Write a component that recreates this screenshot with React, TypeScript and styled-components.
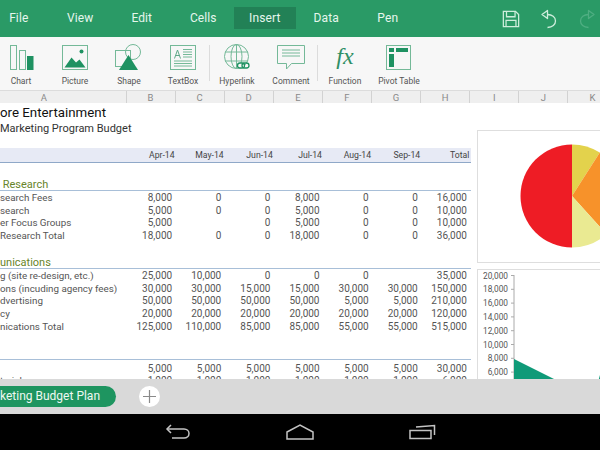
import React from 'react';
import styled, { createGlobalStyle } from 'styled-components';

const GREEN = '#2a9a66';
const OUTLINE = '#74b998';
const FILL = '#1f9262';

const Global = createGlobalStyle`
  html, body { margin: 0; padding: 0; background: #fff; }
  body { font-family: Roboto, "Liberation Sans", sans-serif; }
`;

const Screen = styled.div`
  width: 600px;
  height: 450px;
  display: flex;
  flex-direction: column;
  overflow: hidden;
`;

const TopBar = styled.header`
  height: 37px;
  flex: none;
  background: ${GREEN};
  display: flex;
  align-items: center;
`;

const Menu = styled.nav`
  display: flex;
  margin-left: -12px;
`;

const MenuItem = styled.div<{ $active?: boolean }>`
  width: 61.5px;
  height: 22px;
  margin-top: -1px;
  display: flex;
  align-items: center;
  justify-content: center;
  font-size: 12px;
  letter-spacing: 0.1px;
  color: #e6f6ed;
  background: ${(p) => (p.$active ? '#228156' : 'transparent')};
`;

const Actions = styled.div`
  margin-left: auto;
  display: flex;
  align-items: center;
  gap: 20px;
  padding-right: 4px;
`;

const Ribbon = styled.div`
  height: 53px;
  flex: none;
  background: #f7f7f7;
  display: flex;
  margin-left: -6px;
`;

const Tool = styled.div<{ $divider?: boolean }>`
  position: relative;
  width: 54px;
  display: flex;
  flex-direction: column;
  align-items: center;
  padding-top: 6px;
  box-sizing: border-box;
  &::after {
    content: '';
    display: ${(p) => (p.$divider ? 'block' : 'none')};
    position: absolute;
    right: 0;
    top: 8px;
    height: 36px;
    width: 1px;
    background: #dcdcdc;
  }
`;

const ToolIcon = styled.div`
  height: 28px;
  width: 30px;
  display: flex;
  justify-content: center;
`;

const ToolLabel = styled.span`
  margin-top: 5px;
  font-size: 8.5px;
  color: #555;
  white-space: nowrap;
`;

const FxGlyph = styled.span`
  font-family: "Liberation Serif", serif;
  font-style: italic;
  font-size: 24px;
  line-height: 26px;
  color: #2f8f66;
`;

const ColumnHeader = styled.div`
  height: 13px;
  flex: none;
  display: grid;
  grid-template-columns: 126.5px repeat(10, 49.1px);
  background: #efefef;
  border-top: 1px solid #dcdcdc;
  border-bottom: 1px solid #d4d4d4;
  box-sizing: content-box;
  margin-bottom: -2px;
`;

const ColumnCell = styled.div<{ $first?: boolean }>`
  font-size: 9.5px;
  line-height: 13px;
  text-align: center;
  color: #8a8a8a;
  border-right: 1px solid #d2d2d2;
  padding-right: ${(p) => (p.$first ? '38px' : '0')};
`;

const Sheet = styled.main`
  flex: 1;
  min-height: 0;
  display: flex;
  overflow: hidden;
  background: #fff;
`;

const Table = styled.div`
  width: 470.5px;
  flex: none;
`;

const Title = styled.div`
  height: 18px;
  padding-top: 1px;
  line-height: 17px;
  font-size: 13.3px;
  color: #111;
  white-space: nowrap;
`;

const Subtitle = styled.div`
  height: 14px;
  margin-bottom: 12px;
  line-height: 14px;
  font-size: 11px;
  color: #333;
  white-space: nowrap;
`;

const Grid = styled.div<{ $kind?: 'head' | 'plain' }>`
  display: grid;
  grid-template-columns: 126.5px repeat(7, 49.14px);
  height: ${(p) => (p.$kind === 'head' ? '14px' : '12.75px')};
  align-items: center;
  background: ${(p) => (p.$kind === 'head' ? '#e7eaf5' : 'transparent')};
  border-bottom: ${(p) => (p.$kind === 'head' ? '1px solid #8fa8c8' : 'none')};
`;

const Label = styled.div`
  font-size: 9.8px;
  color: #555;
  white-space: nowrap;
`;

const Num = styled.div<{ $head?: boolean }>`
  font-size: ${(p) => (p.$head ? '8.7px' : '10px')};
  color: ${(p) => (p.$head ? '#444' : '#555')};
  text-align: right;
  padding-right: ${(p) => (p.$head ? '1px' : '3.5px')};
  white-space: nowrap;
`;

const Section = styled.div<{ $top: number }>`
  margin-top: ${(p) => p.$top}px;
  height: 13px;
  line-height: 15px;
  font-size: 11px;
  color: #67842a;
  border-bottom: 1px solid #a8bfd8;
  box-sizing: content-box;
  white-space: nowrap;
`;

const Rule = styled.div`
  margin-top: 26px;
  height: 1px;
  background: #a8bfd8;
  margin-bottom: 2px;
`;

const Charts = styled.aside`
  flex: 1;
  padding: 27px 0 0 6.5px;
  display: flex;
  flex-direction: column;
  gap: 6px;
  min-width: 0;
`;

const ChartCard = styled.div<{ $height: number }>`
  height: ${(p) => p.$height}px;
  flex: none;
  width: 140px;
  border: 1px solid #dedede;
  background: #fff;
  overflow: hidden;
`;

const TabBar = styled.div`
  height: 35px;
  flex: none;
  position: relative;
  z-index: 1;
  background: #d9d9d9;
  display: flex;
  align-items: center;
  gap: 23px;
`;

const SheetTab = styled.div`
  width: 116px;
  height: 21px;
  margin-top: -1px;
  background: #1e9560;
  border-radius: 0 11px 11px 0;
  color: #eef8f2;
  font-size: 12px;
  line-height: 21px;
  white-space: nowrap;
  overflow: hidden;
`;

const AddSheet = styled.div`
  width: 21px;
  height: 21px;
  margin-top: -1px;
  border-radius: 50%;
  background: #fff;
  display: flex;
  align-items: center;
  justify-content: center;
`;

const NavBar = styled.footer`
  height: 36px;
  flex: none;
  background: #000;
  display: grid;
  grid-template-columns: repeat(3, 122px);
  justify-content: center;
  align-items: center;
  justify-items: center;
`;

const SaveIcon = () => (
  <svg width="18" height="18" viewBox="0 0 20 20" fill="none" stroke="#cfeedd" strokeWidth="1.4">
    <path d="M1.5 1.5H15L18.5 5V18.5H1.5Z" />
    <path d="M5 1.5V7.5H14.5V1.5" />
    <path d="M4.5 18.5V11.5H15.5V18.5" />
  </svg>
);

const UndoIcon = ({ flip, color }: { flip?: boolean; color: string }) => (
  <svg
    width="18"
    height="20"
    viewBox="0 0 18 20"
    fill="none"
    stroke={color}
    strokeWidth="1.3"
    style={flip ? { transform: 'scaleX(-1)' } : undefined}
  >
    <path d="M7.5 1.5L2 5.5L7.5 9.5Z" strokeLinejoin="round" />
    <path d="M7.5 5.5C12 5.5 15.5 8 15.5 12C15.5 15.5 12.5 18.5 7.5 18.5" />
  </svg>
);

const ChartIcon = () => (
  <svg width="28" height="28" viewBox="0 0 28 28" fill="none" stroke={OUTLINE} strokeWidth="1">
    <rect x="3.5" y="2.5" width="6" height="24" />
    <rect x="12.5" y="7.5" width="6" height="19" />
    <rect x="20" y="13" width="6.5" height="14" fill={FILL} stroke="none" />
  </svg>
);

const PictureIcon = () => (
  <svg width="28" height="28" viewBox="0 0 28 28" fill="none">
    <rect x="1.5" y="2.5" width="25" height="24" stroke={OUTLINE} />
    <circle cx="20.5" cy="8.5" r="2" fill={FILL} />
    <path d="M3.5 24.5L10.5 14.5L15 19.5L18.5 16.5L24.5 24.5Z" fill={FILL} />
  </svg>
);

const ShapeIcon = () => (
  <svg width="30" height="28" viewBox="0 0 30 28" fill="none" stroke={OUTLINE} strokeWidth="1">
    <rect x="1.5" y="7.5" width="15" height="16" />
    <circle cx="19" cy="9" r="7.5" />
    <path d="M14.5 12L24 27H5Z" fill={FILL} stroke="none" />
  </svg>
);

const TextBoxIcon = () => (
  <svg width="28" height="28" viewBox="0 0 28 28" fill="none" stroke={OUTLINE} strokeWidth="1">
    <rect x="1.5" y="2.5" width="25" height="24" />
    <path d="M5.5 15.5L8.5 7L11.5 15.5M6.5 12.5H10.5" stroke="#5fa888" />
    <path d="M14 6.5H23M14 9H23M14 11.5H23M14 14H23M5 18H23M5 20.5H23M5 23H23" />
  </svg>
);

const HyperlinkIcon = () => (
  <svg width="28" height="28" viewBox="0 0 28 28" fill="none" stroke={OUTLINE} strokeWidth="1">
    <circle cx="13.5" cy="13.5" r="12" />
    <ellipse cx="13.5" cy="13.5" rx="5.5" ry="12" />
    <path d="M13.5 1.5V25.5M2 9H25M2 18H25" />
    <rect x="14.5" y="20" width="7" height="5" rx="2.5" stroke={FILL} strokeWidth="1.3" fill="#f7f7f7" />
    <rect x="19" y="20" width="7" height="5" rx="2.5" stroke={FILL} strokeWidth="1.3" />
  </svg>
);

const CommentIcon = () => (
  <svg width="30" height="28" viewBox="0 0 30 28" fill="none" stroke={OUTLINE} strokeWidth="1">
    <path d="M1.5 2.5H28.5V20.5H15.5L10.5 26V20.5H1.5Z" />
    <path d="M6 7H24M6 10H24M6 13H24" />
  </svg>
);

const PivotIcon = () => (
  <svg width="28" height="28" viewBox="0 0 28 28" fill="none">
    <rect x="1.5" y="2.5" width="24" height="24" stroke={OUTLINE} />
    <rect x="4" y="5" width="5" height="4" fill={FILL} />
    <rect x="11" y="5" width="12" height="4" fill={FILL} />
    <rect x="4" y="11" width="5" height="13" fill={FILL} />
  </svg>
);

const PieChart = () => (
  <svg width="140" height="130" viewBox="0 0 140 130">
    {/* centre sits at 94,65 inside the card */}
    <path d="M94 65L94 13.5A51.5 51.5 0 0 0 94 116.5Z" fill="#ee1c25" />
    <path d="M94 65L94 13.5A51.5 51.5 0 0 1 121.8 21.6Z" fill="#e3d24c" />
    <path d="M94 65L121.8 21.6A51.5 51.5 0 0 1 128.5 103.3Z" fill="#f7922a" />
    <path d="M94 65L128.5 103.3A51.5 51.5 0 0 1 94 116.5Z" fill="#eaea92" />
  </svg>
);

const AXIS = ['20,000', '18,000', '16,000', '14,000', '12,000', '10,000', '8,000', '6,000'];

const AreaChart = () => (
  <svg width="140" height="112" viewBox="0 0 140 112" fontFamily="Roboto, sans-serif">
    <line x1="36" y1="5" x2="36" y2="112" stroke="#aaa" />
    {AXIS.map((t, i) => (
      <g key={t}>
        <text x="30" y={8.5 + i * 13.8} textAnchor="end" fontSize="8.3" fill="#555">
          {t}
        </text>
        <line x1="33" x2="36" y1={5.5 + i * 13.8} y2={5.5 + i * 13.8} stroke="#aaa" />
      </g>
    ))}
    <path d="M36 89L78 110V112H36Z" fill="#0f9a78" />
    <path d="M120 112L122 105V112Z" fill="#0f9a78" />
  </svg>
);

const BackIcon = () => (
  <svg width="26" height="16" viewBox="0 0 26 16" fill="none" stroke="#c4c4c4" strokeWidth="1.5">
    <path d="M6 1L2 5L6 9" />
    <path d="M2 5H19C22 5 24 7 24 9.5C24 12 22 14 19 14H7" />
  </svg>
);

const HomeIcon = () => (
  <svg width="28" height="16" viewBox="0 0 28 16" fill="none" stroke="#c4c4c4" strokeWidth="1.5">
    <path d="M1 8L14 1L27 8V15H1Z" />
  </svg>
);

const RecentsIcon = () => (
  <svg width="27" height="16" viewBox="0 0 27 16" fill="none" stroke="#c4c4c4" strokeWidth="1.5">
    <rect x="1" y="6.5" width="21" height="8" />
    <path d="M7 3L25.5 1.5V11" />
  </svg>
);

const MENU = ['File', 'View', 'Edit', 'Cells', 'Insert', 'Data', 'Pen'];
const COLUMNS = ['A', 'B', 'C', 'D', 'E', 'F', 'G', 'H', 'I', 'J', 'K'];
const MONTHS = ['Apr-14', 'May-14', 'Jun-14', 'Jul-14', 'Aug-14', 'Sep-14', 'Total'];

const TOOLS: { label: string; icon: React.ReactNode; divider?: boolean }[] = [
  { label: 'Chart', icon: <ChartIcon /> },
  { label: 'Picture', icon: <PictureIcon /> },
  { label: 'Shape', icon: <ShapeIcon /> },
  { label: 'TextBox', icon: <TextBoxIcon />, divider: true },
  { label: 'Hyperlink', icon: <HyperlinkIcon /> },
  { label: 'Comment', icon: <CommentIcon />, divider: true },
  { label: 'Function', icon: <FxGlyph>fx</FxGlyph> },
  { label: 'Pivot Table', icon: <PivotIcon /> },
];

type Row = [string, ...string[]];

const RESEARCH: Row[] = [
  ['search Fees', '8,000', '0', '0', '8,000', '0', '0', '16,000'],
  ['search', '5,000', '0', '0', '5,000', '0', '0', '10,000'],
  ['er Focus Groups', '5,000', '', '0', '5,000', '0', '0', '10,000'],
  ['Research Total', '18,000', '0', '0', '18,000', '0', '0', '36,000'],
];

const COMMS: Row[] = [
  ['g (site re-design, etc.)', '25,000', '10,000', '0', '0', '0', '', '35,000'],
  ['ons (incuding agency fees)', '30,000', '30,000', '15,000', '15,000', '30,000', '30,000', '150,000'],
  ['dvertising', '50,000', '50,000', '50,000', '50,000', '5,000', '5,000', '210,000'],
  ['cy', '20,000', '20,000', '20,000', '20,000', '20,000', '20,000', '120,000'],
  ['nications Total', '125,000', '110,000', '85,000', '85,000', '55,000', '55,000', '515,000'],
];

const LAST: Row[] = [
  ['', '5,000', '5,000', '5,000', '5,000', '5,000', '5,000', '30,000'],
  ['terials', '1,000', '1,000', '1,000', '1,000', '1,000', '1,000', '6,000'],
];

const Rows = ({ rows }: { rows: Row[] }) => (
  <>
    {rows.map((r) => (
      <Grid key={r[0] + r[7]}>
        <Label>{r[0]}</Label>
        {r.slice(1).map((v, i) => (
          <Num key={i}>{v}</Num>
        ))}
      </Grid>
    ))}
  </>
);

const App: React.FC = () => (
  <Screen>
    <Global />
    <TopBar>
      <Menu>
        {MENU.map((m) => (
          <MenuItem key={m} $active={m === 'Insert'}>
            {m}
          </MenuItem>
        ))}
      </Menu>
      <Actions>
        <SaveIcon />
        <UndoIcon color="#cfeedd" />
        <UndoIcon flip color="#4fae82" />
      </Actions>
    </TopBar>

    <Ribbon>
      {TOOLS.map((t) => (
        <Tool key={t.label} $divider={t.divider}>
          <ToolIcon>{t.icon}</ToolIcon>
          <ToolLabel>{t.label}</ToolLabel>
        </Tool>
      ))}
    </Ribbon>

    <ColumnHeader>
      {COLUMNS.map((c, i) => (
        <ColumnCell key={c} $first={i === 0}>
          {c}
        </ColumnCell>
      ))}
    </ColumnHeader>

    <Sheet>
      <Table>
        <Title>ore Entertainment</Title>
        <Subtitle>Marketing Program Budget</Subtitle>
        <Grid $kind="head">
          <span />
          {MONTHS.map((m) => (
            <Num key={m} $head>
              {m}
            </Num>
          ))}
        </Grid>
        <Section $top={14}>&nbsp;Research</Section>
        <Rows rows={RESEARCH} />
        <Section $top={13}>unications</Section>
        <Rows rows={COMMS} />
        <Rule />
        <Rows rows={LAST} />
      </Table>
      <Charts>
        <ChartCard $height={131}>
          <PieChart />
        </ChartCard>
        <ChartCard $height={112}>
          <AreaChart />
        </ChartCard>
      </Charts>
    </Sheet>

    <TabBar>
      <SheetTab>keting Budget Plan</SheetTab>
      <AddSheet>
        <svg width="15" height="15" viewBox="0 0 15 15" stroke="#8a8a8a" strokeWidth="1.2">
          <path d="M7.5 1V14M1 7.5H14" />
        </svg>
      </AddSheet>
    </TabBar>

    <NavBar>
      <BackIcon />
      <HomeIcon />
      <RecentsIcon />
    </NavBar>
  </Screen>
);

export default App;
